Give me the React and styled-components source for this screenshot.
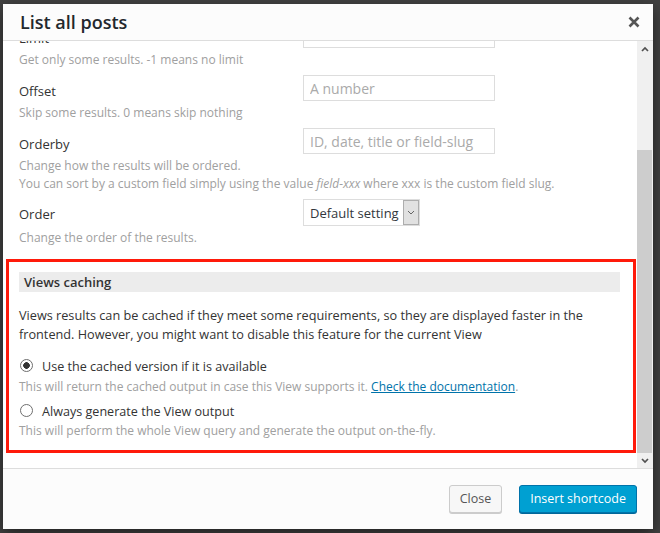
import React, { useCallback, useEffect, useRef, useState } from "react";
import styled, { createGlobalStyle } from "styled-components";

const GlobalStyle = createGlobalStyle`
  *, *::before, *::after { box-sizing: border-box; }
  html, body { margin: 0; height: 100%; }
  body {
    background: #424242;
    font-family: "Open Sans", "Liberation Sans", sans-serif;
    font-size: 13px;
    color: #333;
    overflow: hidden;
  }
`;

const Dialog = styled.div`
  margin: 4px 0 0 3px;
  width: 650px;
  height: 525px;
  background: #fff;
  display: flex;
  flex-direction: column;
  box-shadow: 0 5px 15px rgba(0, 0, 0, 0.5);
`;

const Header = styled.div`
  height: 37px;
  flex: none;
  display: flex;
  align-items: center;
  justify-content: space-between;
  padding: 0 11px 0 17px;
  background: #fcfcfc;
  border-bottom: 1px solid #ddd;
`;

const Title = styled.h1`
  margin: 0;
  font-size: 18px;
  font-weight: 600;
  line-height: 1;
  color: #23282d;
`;

const CloseX = styled.button`
  border: 0;
  padding: 0;
  background: none;
  width: 16px;
  height: 16px;
  display: flex;
  align-items: center;
  justify-content: center;
  cursor: pointer;
`;

const Main = styled.div`
  flex: 1;
  min-height: 0;
  display: flex;
`;

const Body = styled.div`
  flex: 1;
  overflow-y: scroll;
  scrollbar-width: none;
  padding: 8px 16px 15px;
  &::-webkit-scrollbar { display: none; }
`;

const ScrollBar = styled.div`
  width: 16px;
  flex: none;
  display: flex;
  flex-direction: column;
  background: #f0f0f0;
`;

const ScrollButton = styled.div`
  height: 15px;
  flex: none;
  display: flex;
  align-items: center;
  justify-content: center;
`;

const Track = styled.div`
  flex: 1;
  position: relative;
`;

const Thumb = styled.div`
  position: absolute;
  left: 0;
  right: 1px;
  background: #cdcdcd;
`;

const Field = styled.div`
  margin-bottom: 6px;
`;

const Row = styled.div`
  display: flex;
  align-items: center;
`;

const Label = styled.label`
  width: 284px;
  flex: none;
  padding-top: ${(p) => p.$drop ?? 6}px;
  line-height: 18px;
  color: #333;
`;

const Desc = styled.p`
  margin: 3px 0 0;
  font-size: 12px;
  line-height: 18px;
  color: #a0a0a0;
`;

const TextInput = styled.input`
  width: 192px;
  height: 26px;
  border: 1px solid #ddd;
  padding: 0 6px;
  font: 14px "Open Sans", "Liberation Sans", sans-serif;
  color: #333;
  outline: none;
  &::placeholder { color: #aaa; }
`;

const SelectWrap = styled.div`
  width: 117px;
  height: 27px;
  border: 1px solid #ddd;
  display: flex;
  background: #fff;
`;

const Select = styled.select`
  flex: 1;
  min-width: 0;
  appearance: none;
  border: 0;
  background: transparent;
  padding: 0 0 0 6px;
  font: 13px "Open Sans", "Liberation Sans", sans-serif;
  color: #32373c;
  outline: none;
`;

const ArrowBox = styled.span`
  width: 16px;
  flex: none;
  background: #e1e1e1;
  border: 1px solid #adadad;
  display: flex;
  align-items: center;
  justify-content: center;
`;

const CacheBox = styled.section`
  margin: 12px -15px 0 -13px;
  border: 3px solid #ff1a0a;
  padding: 10px 13px 10px 10px;
`;

const SectionTitle = styled.h2`
  margin: 0;
  height: 20px;
  padding: 0 5px;
  background: #ececec;
  font-size: 13px;
  font-weight: 600;
  line-height: 20px;
  color: #333;
`;

const Intro = styled.p`
  margin: 14px 0 0;
  font-size: 12.7px;
  line-height: 19px;
  color: #333;
`;

const Option = styled.label`
  display: flex;
  align-items: flex-start;
  gap: 9px;
  margin-top: ${(p) => p.$gap}px;
  font-size: 12.6px;
  line-height: 20px;
  color: #333;
  cursor: pointer;
`;

const Radio = styled.input`
  appearance: none;
  margin: 2px 0 0 1px;
  width: 13px;
  height: 13px;
  flex: none;
  border: 1px solid #6e6e6e;
  border-radius: 50%;
  background: #fff;
  &:checked {
    background: radial-gradient(circle, #333 0 3px, #fff 3.6px);
  }
`;

const OptionDesc = styled.p`
  margin: ${(p) => p.$top}px 0 0;
  font-size: 12px;
  line-height: 18px;
  color: #a0a0a0;
`;

const DocLink = styled.a`
  color: #0073aa;
`;

const Footer = styled.div`
  height: 61px;
  flex: none;
  border-top: 1px solid #ddd;
  background: #fcfcfc;
  display: flex;
  align-items: center;
  justify-content: flex-end;
  gap: 17px;
  padding: 0 16px 1px;
`;

const Button = styled.button`
  height: 28px;
  padding: 0 10px 1px;
  border-radius: 3px;
  font: 12.5px "Open Sans", "Liberation Sans", sans-serif;
  cursor: pointer;
  border: 1px solid ${(p) => (p.$primary ? "#0073aa" : "#ccc")};
  background: ${(p) => (p.$primary ? "#00a0d2" : "#f7f7f7")};
  color: ${(p) => (p.$primary ? "#fff" : "#555")};
  box-shadow: 0 1px 0 ${(p) => (p.$primary ? "#006799" : "#ccc")};
`;

const Chevron = ({ up }) => (
  <svg width="8" height="6" viewBox="0 0 8 6">
    <path d={up ? "M1 5 4 2 7 5" : "M1 1 4 4 7 1"} fill="none" stroke="#505050" strokeWidth="1.7" />
  </svg>
);

const fields = [
  { label: "Author", placeholder: "ID or author slug", desc: "Show only posts written by these authors" },
  { label: "Post type", placeholder: "post, page", desc: "Comma separated list of post types" },
  { label: "Limit", placeholder: "A number", desc: "Get only some results. -1 means no limit" },
  { label: "Offset", placeholder: "A number", desc: "Skip some results. 0 means skip nothing" },
  {
    label: "Orderby",
    placeholder: "ID, date, title or field-slug",
    desc: (
      <>
        Change how the results will be ordered.
        <br />
        You can sort by a custom field simply using the value <em>field-xxx</em> where xxx is the custom
        field slug.
      </>
    ),
  },
];

export default function App() {
  const bodyRef = useRef(null);
  const trackRef = useRef(null);
  const [thumb, setThumb] = useState({ top: 0, height: 0 });

  const measure = useCallback(() => {
    const el = bodyRef.current;
    const track = trackRef.current;
    if (!el || !track) return;
    const len = track.clientHeight;
    setThumb({
      top: (el.scrollTop / el.scrollHeight) * len,
      height: (el.clientHeight / el.scrollHeight) * len,
    });
  }, []);

  useEffect(() => {
    const el = bodyRef.current;
    if (el) el.scrollTop = el.scrollHeight;
    measure();
  }, [measure]);

  return (
    <>
      <GlobalStyle />
      <Dialog>
        <Header>
          <Title>List all posts</Title>
          <CloseX aria-label="Close">
            <svg width="12" height="12" viewBox="0 0 12 12">
              <path d="M1.5 1.5l9 9M10.5 1.5l-9 9" stroke="#555" strokeWidth="2.6" />
            </svg>
          </CloseX>
        </Header>

        <Main>
          <Body ref={bodyRef} onScroll={measure}>
            {fields.map((f) => (
              <Field key={f.label}>
                <Row>
                  <Label>{f.label}</Label>
                  <TextInput placeholder={f.placeholder} />
                </Row>
                <Desc>{f.desc}</Desc>
              </Field>
            ))}
            <Field>
              <Row>
                <Label $drop={3}>Order</Label>
                <SelectWrap>
                  <Select defaultValue="default">
                    <option value="default">Default setting</option>
                    <option value="asc">Ascending</option>
                    <option value="desc">Descending</option>
                  </Select>
                  <ArrowBox>
                    <svg width="8" height="5" viewBox="0 0 8 5">
                      <path d="M1 1l3 3 3-3" fill="none" stroke="#666" strokeWidth="1" />
                    </svg>
                  </ArrowBox>
                </SelectWrap>
              </Row>
              <Desc>Change the order of the results.</Desc>
            </Field>

            <CacheBox>
              <SectionTitle>Views caching</SectionTitle>
              <Intro>
                Views results can be cached if they meet some requirements, so they are displayed faster in
                the frontend. However, you might want to disable this feature for the current View
              </Intro>
              <Option $gap={13}>
                <Radio type="radio" name="cache" defaultChecked />
                Use the cached version if it is available
              </Option>
              <OptionDesc $top={1}>
                This will return the cached output in case this View supports it.{" "}
                <DocLink href="#">Check the documentation</DocLink>.
              </OptionDesc>
              <Option $gap={6}>
                <Radio type="radio" name="cache" />
                Always generate the View output
              </Option>
              <OptionDesc $top={0}>
                This will perform the whole View query and generate the output on-the-fly.
              </OptionDesc>
            </CacheBox>
          </Body>

          <ScrollBar>
            <ScrollButton>
              <Chevron up />
            </ScrollButton>
            <Track ref={trackRef}>
              <Thumb style={{ top: thumb.top, height: thumb.height }} />
            </Track>
            <ScrollButton>
              <Chevron />
            </ScrollButton>
          </ScrollBar>
        </Main>

        <Footer>
          <Button>Close</Button>
          <Button $primary>Insert shortcode</Button>
        </Footer>
      </Dialog>
    </>
  );
}
